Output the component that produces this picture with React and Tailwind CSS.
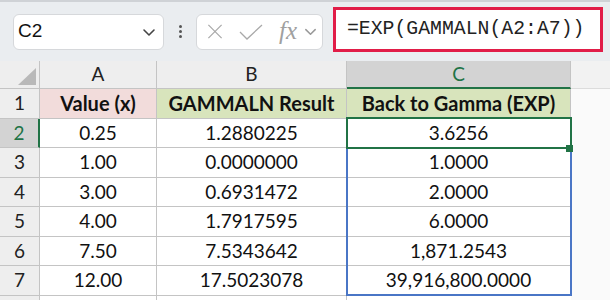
import React from "react";

const rows = [
  ["0.25", "1.2880225", "3.6256"],
  ["1.00", "0.0000000", "1.0000"],
  ["3.00", "0.6931472", "2.0000"],
  ["4.00", "1.7917595", "6.0000"],
  ["7.50", "7.5343642", "1,871.2543"],
  ["12.00", "17.5023078", "39,916,800.0000"],
];

const cellFont = { fontFamily: "Lato, 'Liberation Sans', sans-serif" };

function Chevron({ className }) {
  return (
    <svg viewBox="0 0 16 16" className={className} fill="none" stroke="currentColor" strokeWidth="1.6" strokeLinecap="round" strokeLinejoin="round">
      <path d="M3 6l5 5 5-5" />
    </svg>
  );
}

function Toolbar() {
  return (
    <div className="h-[61px] bg-[#eaedf0] border-t-2 border-[#cfd2d6] flex items-center relative">
      {/* Name box */}
      <div className="ml-[13px] w-[151px] h-[36px] bg-white rounded-md border border-[#d6d8db] flex items-center pl-[4px] pr-[6px] justify-between">
        <span className="text-[19px] text-[#111]" style={{ fontFamily: "'Liberation Sans', Arial, sans-serif" }}>C2</span>
        <Chevron className="w-[16px] h-[16px] text-[#444]" />
      </div>
      {/* Dots */}
      <div className="w-[32px] flex flex-col items-center gap-[2px]">
        <span className="w-[3px] h-[3px] rounded-full bg-[#555]" />
        <span className="w-[3px] h-[3px] rounded-full bg-[#555]" />
        <span className="w-[3px] h-[3px] rounded-full bg-[#555]" />
      </div>
      {/* Function buttons */}
      <div className="w-[127px] h-[36px] bg-white rounded-md border border-[#d6d8db] flex items-center pl-[9px]">
        <svg viewBox="0 0 18 18" className="w-[18px] h-[17px] text-[#a9a9a9]" fill="none" stroke="currentColor" strokeWidth="1.3">
          <path d="M2 2l14 14M16 2L2 16" />
        </svg>
        <svg viewBox="0 0 24 16" className="w-[24px] h-[16px] ml-[15px] text-[#a9a9a9]" fill="none" stroke="currentColor" strokeWidth="1.3">
          <path d="M1 8l7 7L23 1" />
        </svg>
        <span className="ml-[16px] text-[25px] italic text-[#a0a0a0] leading-none -mt-[3px]" style={{ fontFamily: "'Liberation Serif', serif" }}>fx</span>
        <Chevron className="ml-[6px] w-[15px] h-[15px] text-[#999]" />
      </div>
      {/* Formula */}
      <div className="ml-[10px] w-[270px] h-[45px] -mt-[4px] bg-white border-[3px] border-[#e11d48] flex items-center pl-[11px]">
        <span className="text-[19.8px] text-[#222]" style={{ fontFamily: "'Liberation Mono', monospace" }}>=EXP(GAMMALN(A2:A7))</span>
      </div>
    </div>
  );
}

export default function App() {
  const line = "border-r border-b border-[#c4c4c4]";
  return (
    <div className="w-[610px] h-[300px] overflow-hidden bg-white">
      <Toolbar />
      <div className="relative grid grid-cols-[40px_117px_190px_224px_39px] auto-rows-[29.5px] grid-rows-[28px]" style={cellFont}>
        {/* header row */}
        <div className={`bg-[#eeeeee] ${line} flex items-end justify-end p-[3px]`}>
          <div className="w-0 h-0 border-l-[18px] border-l-transparent border-b-[17px] border-b-[#b9b9b9]" />
        </div>
        <div className={`bg-[#eeeeee] ${line} flex items-center justify-center text-[19px] text-[#222]`}>A</div>
        <div className={`bg-[#eeeeee] ${line} flex items-center justify-center text-[19px] text-[#222]`}>B</div>
        <div className="bg-[#d3d3d3] border-r border-[#c4c4c4] border-b-2 border-b-[#217346] flex items-center justify-center text-[19px] text-[#217346]">C</div>
        <div className="bg-[#f2f2f2] border-b border-[#dcdcdc]" />

        {/* row 1 */}
        <div className={`bg-[#eeeeee] ${line} flex items-center justify-center text-[19px] text-[#222]`}>1</div>
        <div className={`bg-[#f2dcdb] ${line} flex items-center justify-center text-[20px] font-bold text-[#111]`}>Value (x)</div>
        <div className={`bg-[#d8e4bc] ${line} flex items-center justify-center text-[20px] font-bold text-[#111]`}>GAMMALN Result</div>
        <div className={`bg-[#d8e4bc] ${line} flex items-center justify-center text-[20px] font-bold text-[#111]`}>Back to Gamma (EXP)</div>
        <div className="bg-[#fafafa]" />

        {rows.map((r, i) => (
          <React.Fragment key={i}>
            <div
              className={
                i === 0
                  ? "bg-[#d3d3d3] border-b border-[#c4c4c4] border-r-2 border-r-[#217346] flex items-center justify-center text-[19px] text-[#217346]"
                  : `bg-[#eeeeee] ${line} flex items-center justify-center text-[19px] text-[#222]`
              }
            >
              {i + 2}
            </div>
            <div className={`${line} flex items-center justify-center text-[19px] text-[#111]`}>{r[0]}</div>
            <div className={`${line} flex items-center justify-center text-[19px] text-[#111]`}>{r[1]}</div>
            <div className={`${line} flex items-center justify-center text-[19px] text-[#111]`}>{r[2]}</div>
            <div className="bg-[#fafafa]" />
          </React.Fragment>
        ))}

        {/* row 8 (cut off) */}
        <div className="bg-[#eeeeee] border-r border-[#c4c4c4]" />
        <div className="border-r border-[#c4c4c4]" />
        <div className="border-r border-[#c4c4c4]" />
        <div />
        <div className="bg-[#fafafa]" />

        {/* spill range outline C2:C7 */}
        <div className="absolute left-[346px] top-[56px] w-[226px] h-[179px] border-2 border-[#4a76c6] pointer-events-none" />
        {/* active cell C2 */}
        <div className="absolute left-[346px] top-[56px] w-[226px] h-[32px] border-[2.5px] border-[#217346] pointer-events-none" />
        <div className="absolute left-[566px] top-[84px] w-[7px] h-[7px] bg-[#217346] pointer-events-none" />
      </div>
    </div>
  );
}
